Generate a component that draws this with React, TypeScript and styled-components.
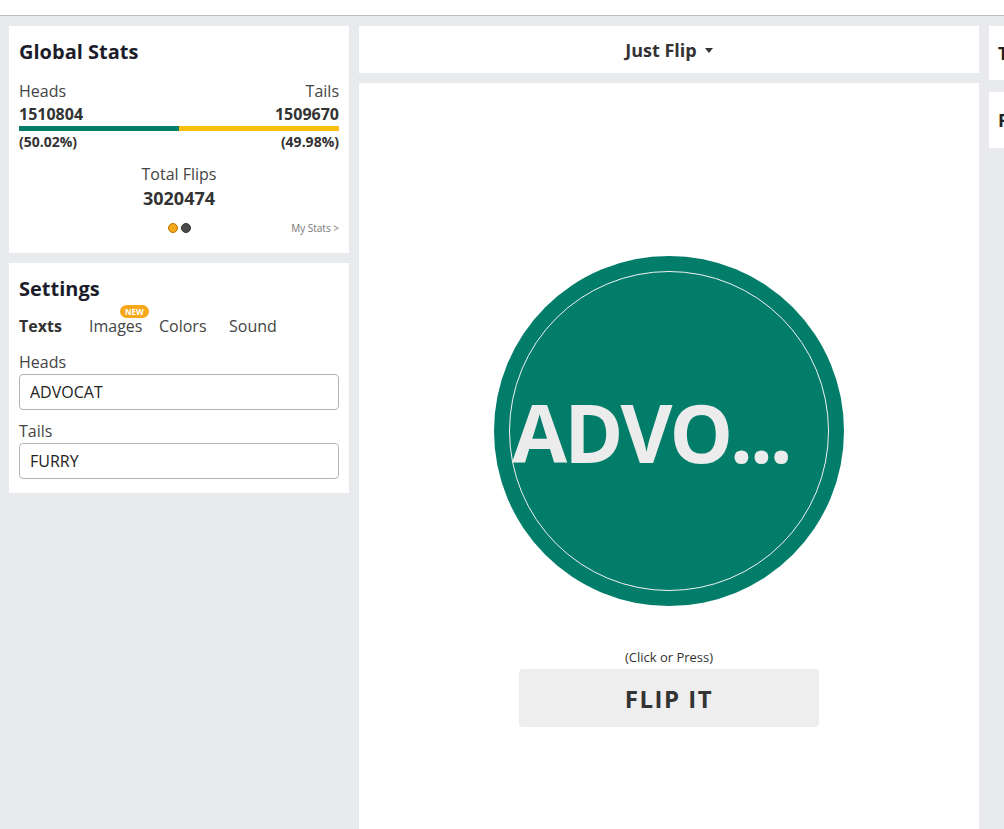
import React from "react";
import styled, { createGlobalStyle } from "styled-components";

const GlobalStyle = createGlobalStyle`
  html, body {
    margin: 0;
    padding: 0;
    background: #e9eaee;
    font-family: "Open Sans", "Liberation Sans", sans-serif;
    color: #333;
    overflow: hidden;
  }
  * { box-sizing: border-box; }
`;

const Header = styled.header`
  height: 16px;
  background: #fff;
  border-bottom: 1px solid #bdbdbd;
`;

const Layout = styled.main`
  display: grid;
  grid-template-columns: 340px 620px 300px;
  gap: 10px;
  padding: 10px 9px;
  align-items: start;
`;

const Column = styled.div<{ $gap?: number }>`
  display: flex;
  flex-direction: column;
  gap: ${(p) => p.$gap ?? 10}px;
`;

const Card = styled.section<{ $height?: number }>`
  background: #fff;
  padding: 10px;
  height: ${(p) => (p.$height ? `${p.$height}px` : "auto")};
`;

const CardTitle = styled.h2`
  margin: 0;
  font-size: 20px;
  font-weight: 700;
  color: #1c1d2b;
  line-height: 31px;
`;

const SplitRow = styled.div<{ $top?: number }>`
  display: flex;
  justify-content: space-between;
  align-items: baseline;
  margin-top: ${(p) => p.$top ?? 0}px;
`;

const Label = styled.span`
  font-size: 16px;
  line-height: 22px;
  color: #444;
`;

const Count = styled.span`
  font-size: 16px;
  font-weight: 700;
  line-height: 24px;
  color: #333;
`;

const Percent = styled.span`
  font-size: 14px;
  font-weight: 700;
  line-height: 22px;
  color: #333;
`;

const Bar = styled.div`
  display: flex;
  height: 5px;
`;

const BarPart = styled.div<{ $color: string }>`
  background: ${(p) => p.$color};
  height: 100%;
`;

const Centered = styled.div`
  display: flex;
  flex-direction: column;
  align-items: center;
  margin-top: 10px;
`;

const Total = styled.span`
  font-size: 18px;
  font-weight: 700;
  line-height: 26px;
  color: #333;
`;

const Footer = styled.div`
  display: grid;
  grid-template-columns: 1fr auto 1fr;
  align-items: center;
  height: 14px;
  margin-top: 10px;
`;

const Dots = styled.div`
  grid-column: 2;
  display: flex;
  gap: 3px;
`;

const Dot = styled.span<{ $color: string; $ring: string }>`
  width: 10px;
  height: 10px;
  border-radius: 50%;
  background: ${(p) => p.$color};
  border: 1px solid ${(p) => p.$ring};
`;

const MyStats = styled.a`
  grid-column: 3;
  justify-self: end;
  font-size: 10px;
  line-height: 14px;
  color: #777;
  text-decoration: none;
`;

const Tabs = styled.nav`
  display: flex;
  margin-top: 11px;
`;

const Tab = styled.span<{ $active?: boolean }>`
  position: relative;
  width: 70px;
  font-size: 16px;
  line-height: 22px;
  font-weight: ${(p) => (p.$active ? 700 : 400)};
  color: ${(p) => (p.$active ? "#333" : "#444")};
`;

const NewBadge = styled.span`
  position: absolute;
  top: -10px;
  left: 31px;
  background: #f6a81c;
  color: #fff;
  font-size: 8px;
  font-weight: 700;
  line-height: 13px;
  padding: 0 5px;
  border-radius: 7px;
`;

const Field = styled.label`
  display: flex;
  flex-direction: column;
  margin-top: 14px;
  & + & {
    margin-top: 10px;
  }
`;

const Input = styled.input`
  margin-top: 1px;
  height: 36px;
  width: 100%;
  border: 1px solid #b5b5b5;
  border-radius: 4px;
  padding: 0 10px;
  font-family: inherit;
  font-size: 16px;
  color: #222;
  background: #fff;
`;

const ModeBar = styled.div`
  background: #fff;
  height: 47px;
  display: flex;
  align-items: center;
  justify-content: center;
  gap: 8px;
  font-size: 18px;
  font-weight: 700;
  color: #333;
`;

const Caret = styled.span`
  width: 0;
  height: 0;
  border-left: 4.5px solid transparent;
  border-right: 4.5px solid transparent;
  border-top: 5px solid #333;
  margin-top: 2px;
`;

const Stage = styled.div`
  background: #fff;
  height: 760px;
  display: flex;
  flex-direction: column;
  align-items: center;
  padding-top: 173px;
`;

const Coin = styled.button`
  width: 350px;
  height: 350px;
  border-radius: 50%;
  background: #017d6a;
  border: none;
  padding: 15px;
  cursor: pointer;
`;

const CoinFace = styled.div`
  width: 100%;
  height: 100%;
  border-radius: 50%;
  border: 1.5px solid #f2f2f2;
  display: flex;
  align-items: center;
  justify-content: flex-start;
  padding-left: 2px;
  font-family: "Open Sans", "Liberation Sans", sans-serif;
  font-size: 80px;
  font-weight: 700;
  letter-spacing: -3px;
  color: #ececec;
  white-space: nowrap;
`;

const Hint = styled.span`
  margin-top: 42px;
  font-size: 13px;
  line-height: 18px;
  color: #333;
`;

const FlipButton = styled.button`
  margin-top: 3px;
  width: 300px;
  height: 58px;
  background: #eeeeee;
  border: none;
  border-radius: 4px;
  font-family: inherit;
  font-size: 24px;
  font-weight: 700;
  letter-spacing: 1.5px;
  color: #333;
`;

const SideCard = styled.div<{ $height: number }>`
  background: #fff;
  height: ${(p) => p.$height}px;
  padding: 0 9px;
  display: flex;
  align-items: center;
  font-size: 18px;
  font-weight: 700;
  color: #222;
  white-space: nowrap;
`;

export default function App() {
  const heads = 1510804;
  const tails = 1509670;
  const headsPct = (heads / (heads + tails)) * 100;
  return (
    <>
      <GlobalStyle />
      <Header />
      <Layout>
        <Column>
          <Card $height={227}>
            <CardTitle>Global Stats</CardTitle>
            <SplitRow $top={13}>
              <Label>Heads</Label>
              <Label>Tails</Label>
            </SplitRow>
            <SplitRow>
              <Count>{heads}</Count>
              <Count>{tails}</Count>
            </SplitRow>
            <Bar>
              <BarPart $color="#017d6a" style={{ width: `${headsPct}%` }} />
              <BarPart $color="#fbc10a" style={{ flex: 1 }} />
            </Bar>
            <SplitRow>
              <Percent>(50.02%)</Percent>
              <Percent>(49.98%)</Percent>
            </SplitRow>
            <Centered>
              <Label>Total Flips</Label>
              <Total>{heads + tails}</Total>
            </Centered>
            <Footer>
              <Dots>
                <Dot $color="#f6a81c" $ring="#b37400" />
                <Dot $color="#4a4a4a" $ring="#333" />
              </Dots>
              <MyStats>My Stats &gt;</MyStats>
            </Footer>
          </Card>
          <Card $height={230}>
            <CardTitle>Settings</CardTitle>
            <Tabs>
              <Tab $active>Texts</Tab>
              <Tab>
                Images
                <NewBadge>NEW</NewBadge>
              </Tab>
              <Tab>Colors</Tab>
              <Tab>Sound</Tab>
            </Tabs>
            <Field>
              <Label>Heads</Label>
              <Input defaultValue="ADVOCAT" />
            </Field>
            <Field>
              <Label>Tails</Label>
              <Input defaultValue="FURRY" />
            </Field>
          </Card>
        </Column>
        <Column>
          <ModeBar>
            Just Flip <Caret />
          </ModeBar>
          <Stage>
            <Coin>
              <CoinFace>ADVO...</CoinFace>
            </Coin>
            <Hint>(Click or Press)</Hint>
            <FlipButton>FLIP IT</FlipButton>
          </Stage>
        </Column>
        <Column $gap={12}>
          <SideCard $height={54}>Top Flippers</SideCard>
          <SideCard $height={56}>Flip History</SideCard>
        </Column>
      </Layout>
    </>
  );
}
